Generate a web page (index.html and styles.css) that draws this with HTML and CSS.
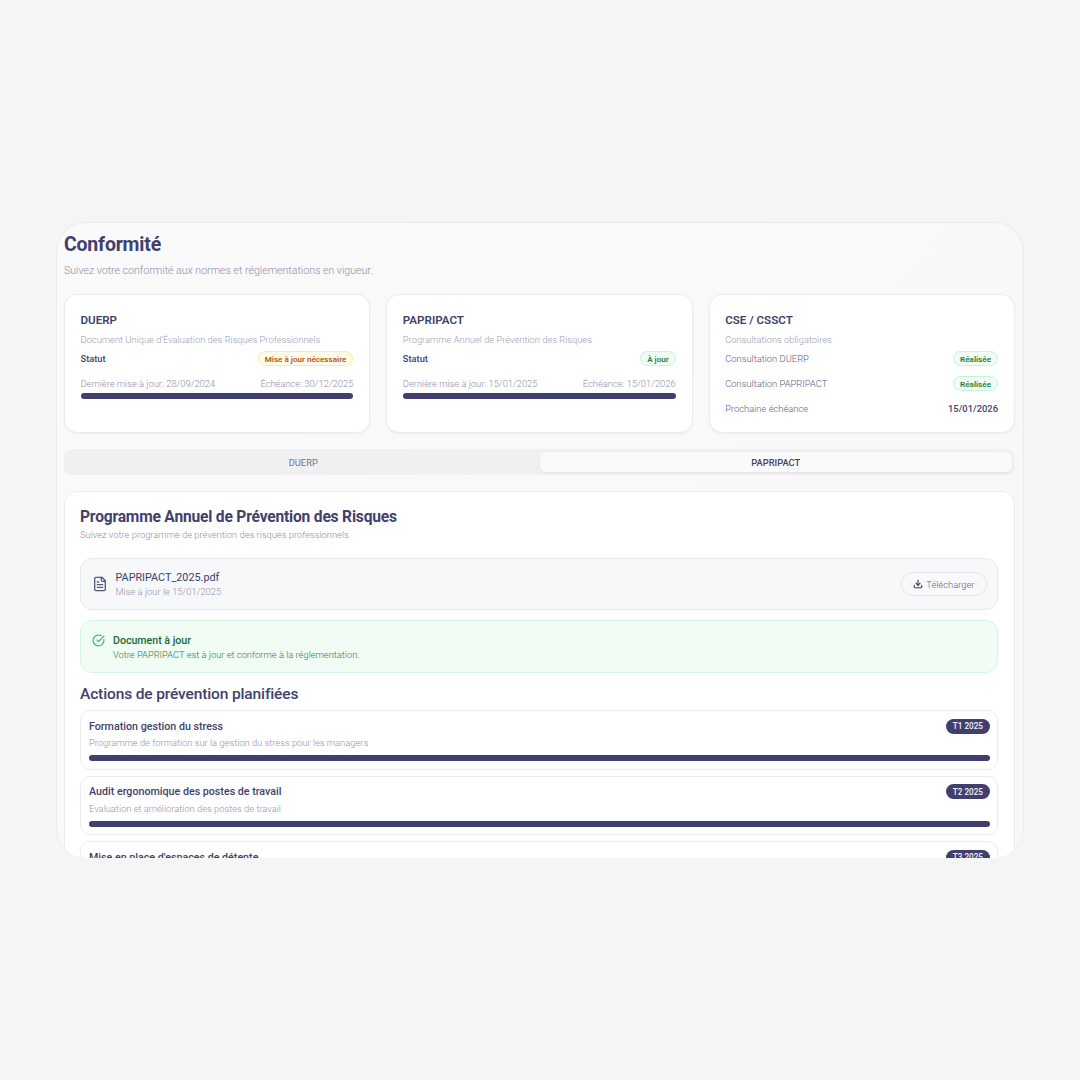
FILE: index.html
```html
<!DOCTYPE html>
<html lang="fr">
<head>
<meta charset="utf-8">
<title>Conformité</title>
<link rel="stylesheet" href="styles.css">
</head>
<body>
<main class="frame">
  <header class="head">
    <h1>Conformité</h1>
    <p>Suivez votre conformité aux normes et réglementations en vigueur.</p>
  </header>

  <section class="cards">
    <article class="card">
      <h2>DUERP</h2>
      <p class="desc">Document Unique d'Évaluation des Risques Professionnels</p>
      <div class="row"><span class="label">Statut</span><span class="badge warn">Mise à jour nécessaire</span></div>
      <div class="dates"><span>Dernière mise à jour: 28/09/2024</span><span>Échéance: 30/12/2025</span></div>
      <div class="bar"></div>
    </article>
    <article class="card">
      <h2>PAPRIPACT</h2>
      <p class="desc">Programme Annuel de Prévention des Risques</p>
      <div class="row"><span class="label">Statut</span><span class="badge ok">À jour</span></div>
      <div class="dates"><span>Dernière mise à jour: 15/01/2025</span><span>Échéance: 15/01/2026</span></div>
      <div class="bar"></div>
    </article>
    <article class="card">
      <h2>CSE / CSSCT</h2>
      <p class="desc">Consultations obligatoires</p>
      <div class="rows">
        <div class="row"><span class="plain">Consultation DUERP</span><span class="badge ok">Réalisée</span></div>
        <div class="row"><span class="plain">Consultation PAPRIPACT</span><span class="badge ok">Réalisée</span></div>
        <div class="row"><span class="plain">Prochaine échéance</span><span class="date">15/01/2026</span></div>
      </div>
    </article>
  </section>

  <nav class="tabs">
    <span class="tab">DUERP</span>
    <span class="tab active">PAPRIPACT</span>
  </nav>

  <section class="panel">
    <h2 class="panel-title">Programme Annuel de Prévention des Risques</h2>
    <p class="panel-sub">Suivez votre programme de prévention des risques professionnels</p>

    <div class="file">
      <svg class="file-icon" viewBox="0 0 24 24" fill="none" stroke="currentColor" stroke-width="2" stroke-linecap="round" stroke-linejoin="round"><path d="M15 2H6a2 2 0 0 0-2 2v16a2 2 0 0 0 2 2h12a2 2 0 0 0 2-2V7z"/><path d="M14 2v4a2 2 0 0 0 2 2h4"/><path d="M10 9H8"/><path d="M16 13H8"/><path d="M16 17H8"/></svg>
      <div class="file-text">
        <strong>PAPRIPACT_2025.pdf</strong>
        <span>Mise à jour le 15/01/2025</span>
      </div>
      <button class="download" type="button">
        <svg viewBox="0 0 24 24" fill="none" stroke="currentColor" stroke-width="2.6" stroke-linecap="round" stroke-linejoin="round"><path d="M21 15v4a2 2 0 0 1-2 2H5a2 2 0 0 1-2-2v-4"/><path d="m7 10 5 5 5-5"/><path d="M12 15V3"/></svg>
        Télécharger
      </button>
    </div>

    <div class="alert">
      <svg viewBox="0 0 24 24" fill="none" stroke="currentColor" stroke-width="2" stroke-linecap="round" stroke-linejoin="round"><path d="M21.8 10A10 10 0 1 1 17 3.34"/><path d="m9 11 3 3L22 4"/></svg>
      <div>
        <strong>Document à jour</strong>
        <span>Votre PAPRIPACT est à jour et conforme à la réglementation.</span>
      </div>
    </div>

    <h3 class="actions-title">Actions de prévention planifiées</h3>

    <div class="actions">
      <article class="action">
        <div class="action-top"><h4>Formation gestion du stress</h4><span class="tag">T1 2025</span></div>
        <p>Programme de formation sur la gestion du stress pour les managers</p>
        <div class="bar"></div>
      </article>
      <article class="action">
        <div class="action-top"><h4>Audit ergonomique des postes de travail</h4><span class="tag">T2 2025</span></div>
        <p>Evaluation et amélioration des postes de travail</p>
        <div class="bar"></div>
      </article>
      <article class="action">
        <div class="action-top"><h4>Mise en place d'espaces de détente</h4><span class="tag">T3 2025</span></div>
      </article>
    </div>
  </section>
</main>
</body>
</html>
```

FILE: styles.css
```css
* { box-sizing: border-box; }
html, body { margin: 0; height: 100%; }
body {
  background: #f5f5f5;
  font-family: Roboto, "Liberation Sans", sans-serif;
  color: #413f6c;
  padding: 222px 56px 0;
}
h1, h2, h3, h4, p { margin: 0; }

.frame {
  width: 968px;
  height: 636px;
  overflow: hidden;
  border: 1px solid #ebebed;
  border-bottom: 0;
  border-radius: 30px;
  padding: 9px 8px 0 7px;
  background: linear-gradient(135deg, #fafafa, #f7f7f8);
}

.head h1 { font-size: 19.5px; line-height: 26px; font-weight: 700; letter-spacing: -0.2px; }
.head p { margin-top: 5.5px; font-size: 10.6px; line-height: 14px; font-weight: 300; color: #8d8ca8; }

.cards { display: flex; gap: 16px; margin-top: 16.5px; }
.card {
  flex: 1;
  height: 139px;
  padding: 16px 16px 16px 15.5px;
  background: #fff;
  border: 1px solid #ebebee;
  border-radius: 13px;
  box-shadow: 0 1px 2px rgba(60, 60, 90, .06);
}
.card h2 { font-size: 11.6px; line-height: 18px; font-weight: 600; }
.desc { margin-top: 4px; font-size: 9.35px; line-height: 13px; font-weight: 300; color: #9c9bb3; }

.row { display: flex; justify-content: space-between; align-items: center; margin-top: 5px; height: 15px; }
.label { font-size: 9.3px; font-weight: 500; }
.plain { font-size: 9.4px; font-weight: 300; color: #5f5e83; }
.date { font-size: 9.4px; font-weight: 500; }
.rows { display: flex; flex-direction: column; gap: 10px; }
.rows .row { margin-top: 0; }
.rows .row:first-child { margin-top: 5px; }

.badge {
  display: inline-flex;
  align-items: center;
  height: 15px;
  padding: 0 6px;
  border-radius: 8px;
  font-size: 8.1px;
  font-weight: 600;
  border: 1px solid;
}
.warn { background: #fefce8; border-color: #fdeaa0; color: #b9521a; }
.ok { background: #effcf3; border-color: #c5f5d5; color: #1a8044; }

.dates {
  display: flex;
  justify-content: space-between;
  margin-top: 11px;
  font-size: 9.35px;
  line-height: 13px;
  font-weight: 300;
  color: #8f8ea9;
}
.bar { height: 6px; margin-top: 3px; border-radius: 3px; background: #413f6c; }

.tabs {
  display: flex;
  height: 26px;
  margin-top: 16px;
  padding: 3px;
  background: #f0f0f2;
  border-radius: 8px;
}
.tab {
  flex: 1;
  display: flex;
  align-items: center;
  justify-content: center;
  border-radius: 6px;
  font-size: 9.3px;
  font-weight: 400;
  color: #72718f;
}
.tab.active {
  background: #fafafa;
  color: #413f6c;
  font-weight: 500;
  box-shadow: 0 1px 2px rgba(60, 60, 90, .08);
}

.panel {
  margin-top: 16px;
  padding: 16px 16px 16px 15px;
  height: 400px;
  background: #fff;
  border: 1px solid #ebebee;
  border-radius: 13px;
}
.panel-title { font-size: 15.6px; line-height: 18px; font-weight: 700; letter-spacing: -0.2px; }
.panel-sub { margin-top: 2px; font-size: 9.35px; line-height: 13px; font-weight: 300; color: #8f8ea9; }

.file {
  display: flex;
  align-items: center;
  height: 52px;
  margin-top: 17px;
  padding: 0 10px 0 11px;
  background: #f7f8fa;
  border: 1px solid #e8e8ec;
  border-radius: 12px;
}
.file-icon { width: 16px; height: 16px; flex: none; color: #55597c; }
.file-text { flex: 1; margin-left: 7.5px; display: flex; flex-direction: column; }
.file-text strong { font-size: 10.8px; line-height: 14px; font-weight: 400; color: #3f3e68; }
.file-text span { margin-top: 1px; font-size: 9.4px; line-height: 12px; font-weight: 300; color: #9392ac; }
.download {
  display: inline-flex;
  align-items: center;
  gap: 3px;
  height: 24px;
  padding: 0 11.5px;
  background: #f9f9fb;
  border: 1.5px solid #e2e2e7;
  border-radius: 12px;
  font: 300 9.4px Roboto, sans-serif;
  color: #5f5e83;
}
.download svg { width: 10px; height: 10px; color: #413f6c; }

.alert {
  display: flex;
  height: 53px;
  margin-top: 10px;
  padding: 13px 11px;
  gap: 8px;
  background: #f0fcf4;
  border: 1px solid #d3f7de;
  border-radius: 12px;
}
.alert svg { width: 13px; height: 13px; flex: none; color: #28b45f; }
.alert div { display: flex; flex-direction: column; margin-top: -0.5px; }
.alert strong { font-size: 10.6px; line-height: 13px; font-weight: 500; color: #136a38; }
.alert span { margin-top: 1.5px; font-size: 9.35px; line-height: 13px; font-weight: 300; color: #1f8349; }

.actions-title { margin-top: 11.5px; font-size: 15.55px; line-height: 18px; font-weight: 500; letter-spacing: -0.15px; }

.actions { display: flex; flex-direction: column; gap: 6px; margin-top: 7.5px; }
.action {
  height: 59.7px;
  padding: 7.5px 7px 8px 8px;
  background: #fff;
  border: 1px solid #ebebee;
  border-radius: 10px;
}
.action-top { display: flex; justify-content: space-between; align-items: center; height: 15px; }
.action h4 { font-size: 10.7px; font-weight: 500; }
.tag {
  display: inline-flex;
  align-items: center;
  height: 15px;
  padding: 0 7px;
  border-radius: 8px;
  background: #413f6c;
  color: #f3f3f7;
  font-size: 8.2px;
  font-weight: 500;
}
.action p { margin-top: 2.5px; font-size: 9.35px; line-height: 13px; font-weight: 300; color: #9392ac; }
.action .bar { margin-top: 6px; }
```
